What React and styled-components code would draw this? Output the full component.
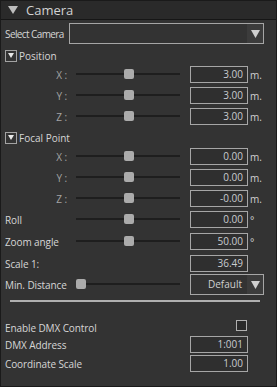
import React from "react";
import styled, { createGlobalStyle } from "styled-components";

const GlobalStyle = createGlobalStyle`
  html, body { margin: 0; padding: 0; background: #333333; }
  * { box-sizing: border-box; }
`;

const Panel = styled.div`
  width: 277px;
  height: 387px;
  border: 1px solid #1a1a1a;
  background: #333333;
  font-family: "Open Sans", "Noto Sans", sans-serif;
  font-size: 10px;
  color: #d6d6d6;
  overflow: hidden;
`;

const Header = styled.div`
  height: 19px;
  background: #2a2a2a;
  border-bottom: 1px solid #161616;
  display: flex;
  align-items: center;
  padding-left: 7px;
  gap: 8px;
`;

const HeaderTitle = styled.span`
  font-size: 13px;
  color: #d2d2d2;
  line-height: 18px;
`;

const Body = styled.div`
  padding-left: 4px;
  display: flex;
  flex-direction: column;
`;

const Row = styled.div`
  display: grid;
  grid-template-columns: 71px 114px 58px 1fr;
  align-items: center;
  height: ${(p) => p.$h || 17}px;
  margin-top: ${(p) => p.$mt || 0}px;
`;

const FlexRow = styled.div`
  display: flex;
  align-items: center;
  height: ${(p) => p.$h || 17}px;
  margin-top: ${(p) => p.$mt || 0}px;
`;

const Label = styled.span`
  white-space: nowrap;
  letter-spacing: -0.1px;
  color: ${(p) => (p.$dim ? "#a4a4a4" : "#d6d6d6")};
  text-align: ${(p) => (p.$axis ? "right" : "left")};
  padding-right: ${(p) => (p.$axis ? "9px" : "0")};
  grid-column: 1;
`;

const SelectLabel = styled.span`
  width: 64px;
  flex: none;
  white-space: nowrap;
  letter-spacing: -0.6px;
`;

const Slider = styled.div`
  position: relative;
  width: 104px;
  height: 17px;
  grid-column: 2;
  &::before {
    content: "";
    position: absolute;
    left: 0;
    right: 0;
    top: 7px;
    height: 2px;
    background: #1e1e1e;
  }
`;

const Thumb = styled.div`
  position: absolute;
  top: 3px;
  width: 10px;
  height: 10px;
  border-radius: 2px;
  background: #ababab;
`;

const NumberBox = styled.div`
  grid-column: 3;
  width: 58px;
  height: 17px;
  border: 1px solid #a6a6a6;
  background: #2f2f2f;
  text-align: right;
  padding-right: 4px;
  line-height: 15px;
  color: #c9ccd0;
`;

const Unit = styled.span`
  grid-column: 4;
  padding-left: 2px;
  color: #d0d0d0;
`;

const DropBox = styled.div`
  grid-column: ${(p) => (p.$wide ? "auto" : "3 / 5")};
  width: ${(p) => p.$w}px;
  height: ${(p) => p.$h}px;
  border: 1px solid #a6a6a6;
  background: #333333;
  display: flex;
  align-items: stretch;
`;

const DropText = styled.span`
  flex: 1;
  text-align: right;
  padding-right: 5px;
  line-height: ${(p) => p.$h - 2}px;
  color: #d0d0d0;
`;

const DropButton = styled.div`
  width: 16px;
  flex: none;
  background: #3c3c3c;
  display: flex;
  align-items: center;
  justify-content: center;
`;

const ToggleBox = styled.div`
  width: 12px;
  height: 12px;
  border: 1px solid #a3a3a3;
  display: flex;
  justify-content: center;
  padding-top: 2px;
  flex: none;
`;

const ToggleLabel = styled.span`
  margin-left: 2px;
  color: #d6d6d6;
`;

const Separator = styled.div`
  margin-left: 5px;
  width: 250px;
  height: 2px;
  background: #b0b0b0;
  margin-top: ${(p) => p.$mt}px;
`;

const CheckBox = styled.div`
  grid-column: 3;
  justify-self: end;
  align-self: start;
  margin-right: 1px;
  width: 11px;
  height: 11px;
  border: 1px solid #b0b0b0;
  background: #2a2a2a;
`;

const DownTri = ({ w, h, color }) => (
  <svg width={w} height={h} viewBox={`0 0 ${w} ${h}`}>
    <polygon points={`0,0 ${w},0 ${w / 2},${h}`} fill={color} />
  </svg>
);

const SliderRow = ({ label, axis, value, unit, pos = 48, mt }) => (
  <Row $mt={mt}>
    <Label $axis={axis} $dim={axis}>{label}</Label>
    <Slider>
      <Thumb style={{ left: `${pos}px` }} />
    </Slider>
    <NumberBox>{value}</NumberBox>
    <Unit>{unit}</Unit>
  </Row>
);

const Toggle = ({ label, mt }) => (
  <FlexRow $h={12} $mt={mt}>
    <ToggleBox>
      <DownTri w={6} h={5} color="#e8e8e8" />
    </ToggleBox>
    <ToggleLabel>{label}</ToggleLabel>
  </FlexRow>
);

export default function App() {
  return (
    <>
      <GlobalStyle />
      <Panel>
        <Header>
          <DownTri w={10} h={8} color="#bdbdbd" />
          <HeaderTitle>Camera</HeaderTitle>
        </Header>
        <Body>
          <FlexRow $h={21} $mt={3}>
            <SelectLabel>Select Camera</SelectLabel>
            <DropBox $wide $w={195} $h={21}>
              <DropText $h={21} />
              <DropButton>
                <DownTri w={9} h={8} color="#d0d0d0" />
              </DropButton>
            </DropBox>
          </FlexRow>

          <Toggle label="Position" mt={6} />
          <SliderRow label="X :" axis value="3.00" unit="m." mt={4} />
          <SliderRow label="Y :" axis value="3.00" unit="m." mt={4} />
          <SliderRow label="Z :" axis value="3.00" unit="m." mt={4} />

          <Toggle label="Focal Point" mt={7} />
          <SliderRow label="X :" axis value="0.00" unit="m." mt={4} />
          <SliderRow label="Y :" axis value="0.00" unit="m." mt={4} />
          <SliderRow label="Z :" axis value="-0.00" unit="m." mt={4} />

          <SliderRow label="Roll" value="0.00" unit="°" mt={4} />
          <SliderRow label="Zoom angle" value="50.00" unit="°" mt={5} />
          <Row $mt={5}>
            <Label>Scale 1:</Label>
            <NumberBox>36.49</NumberBox>
          </Row>
          <Row $h={21} $mt={2}>
            <Label>Min. Distance</Label>
            <Slider>
              <Thumb style={{ left: "0px" }} />
            </Slider>
            <DropBox $w={74} $h={21}>
              <DropText $h={21}>Default</DropText>
              <DropButton>
                <DownTri w={9} h={8} color="#d0d0d0" />
              </DropButton>
            </DropBox>
          </Row>

          <Separator $mt={5} />

          <Row $h={16} $mt={18}>
            <Label>Enable DMX Control</Label>
            <CheckBox />
          </Row>
          <Row $mt={0}>
            <Label>DMX Address</Label>
            <NumberBox>1:001</NumberBox>
          </Row>
          <Row $mt={2}>
            <Label>Coordinate Scale</Label>
            <NumberBox>1.00</NumberBox>
          </Row>
        </Body>
      </Panel>
    </>
  );
}
